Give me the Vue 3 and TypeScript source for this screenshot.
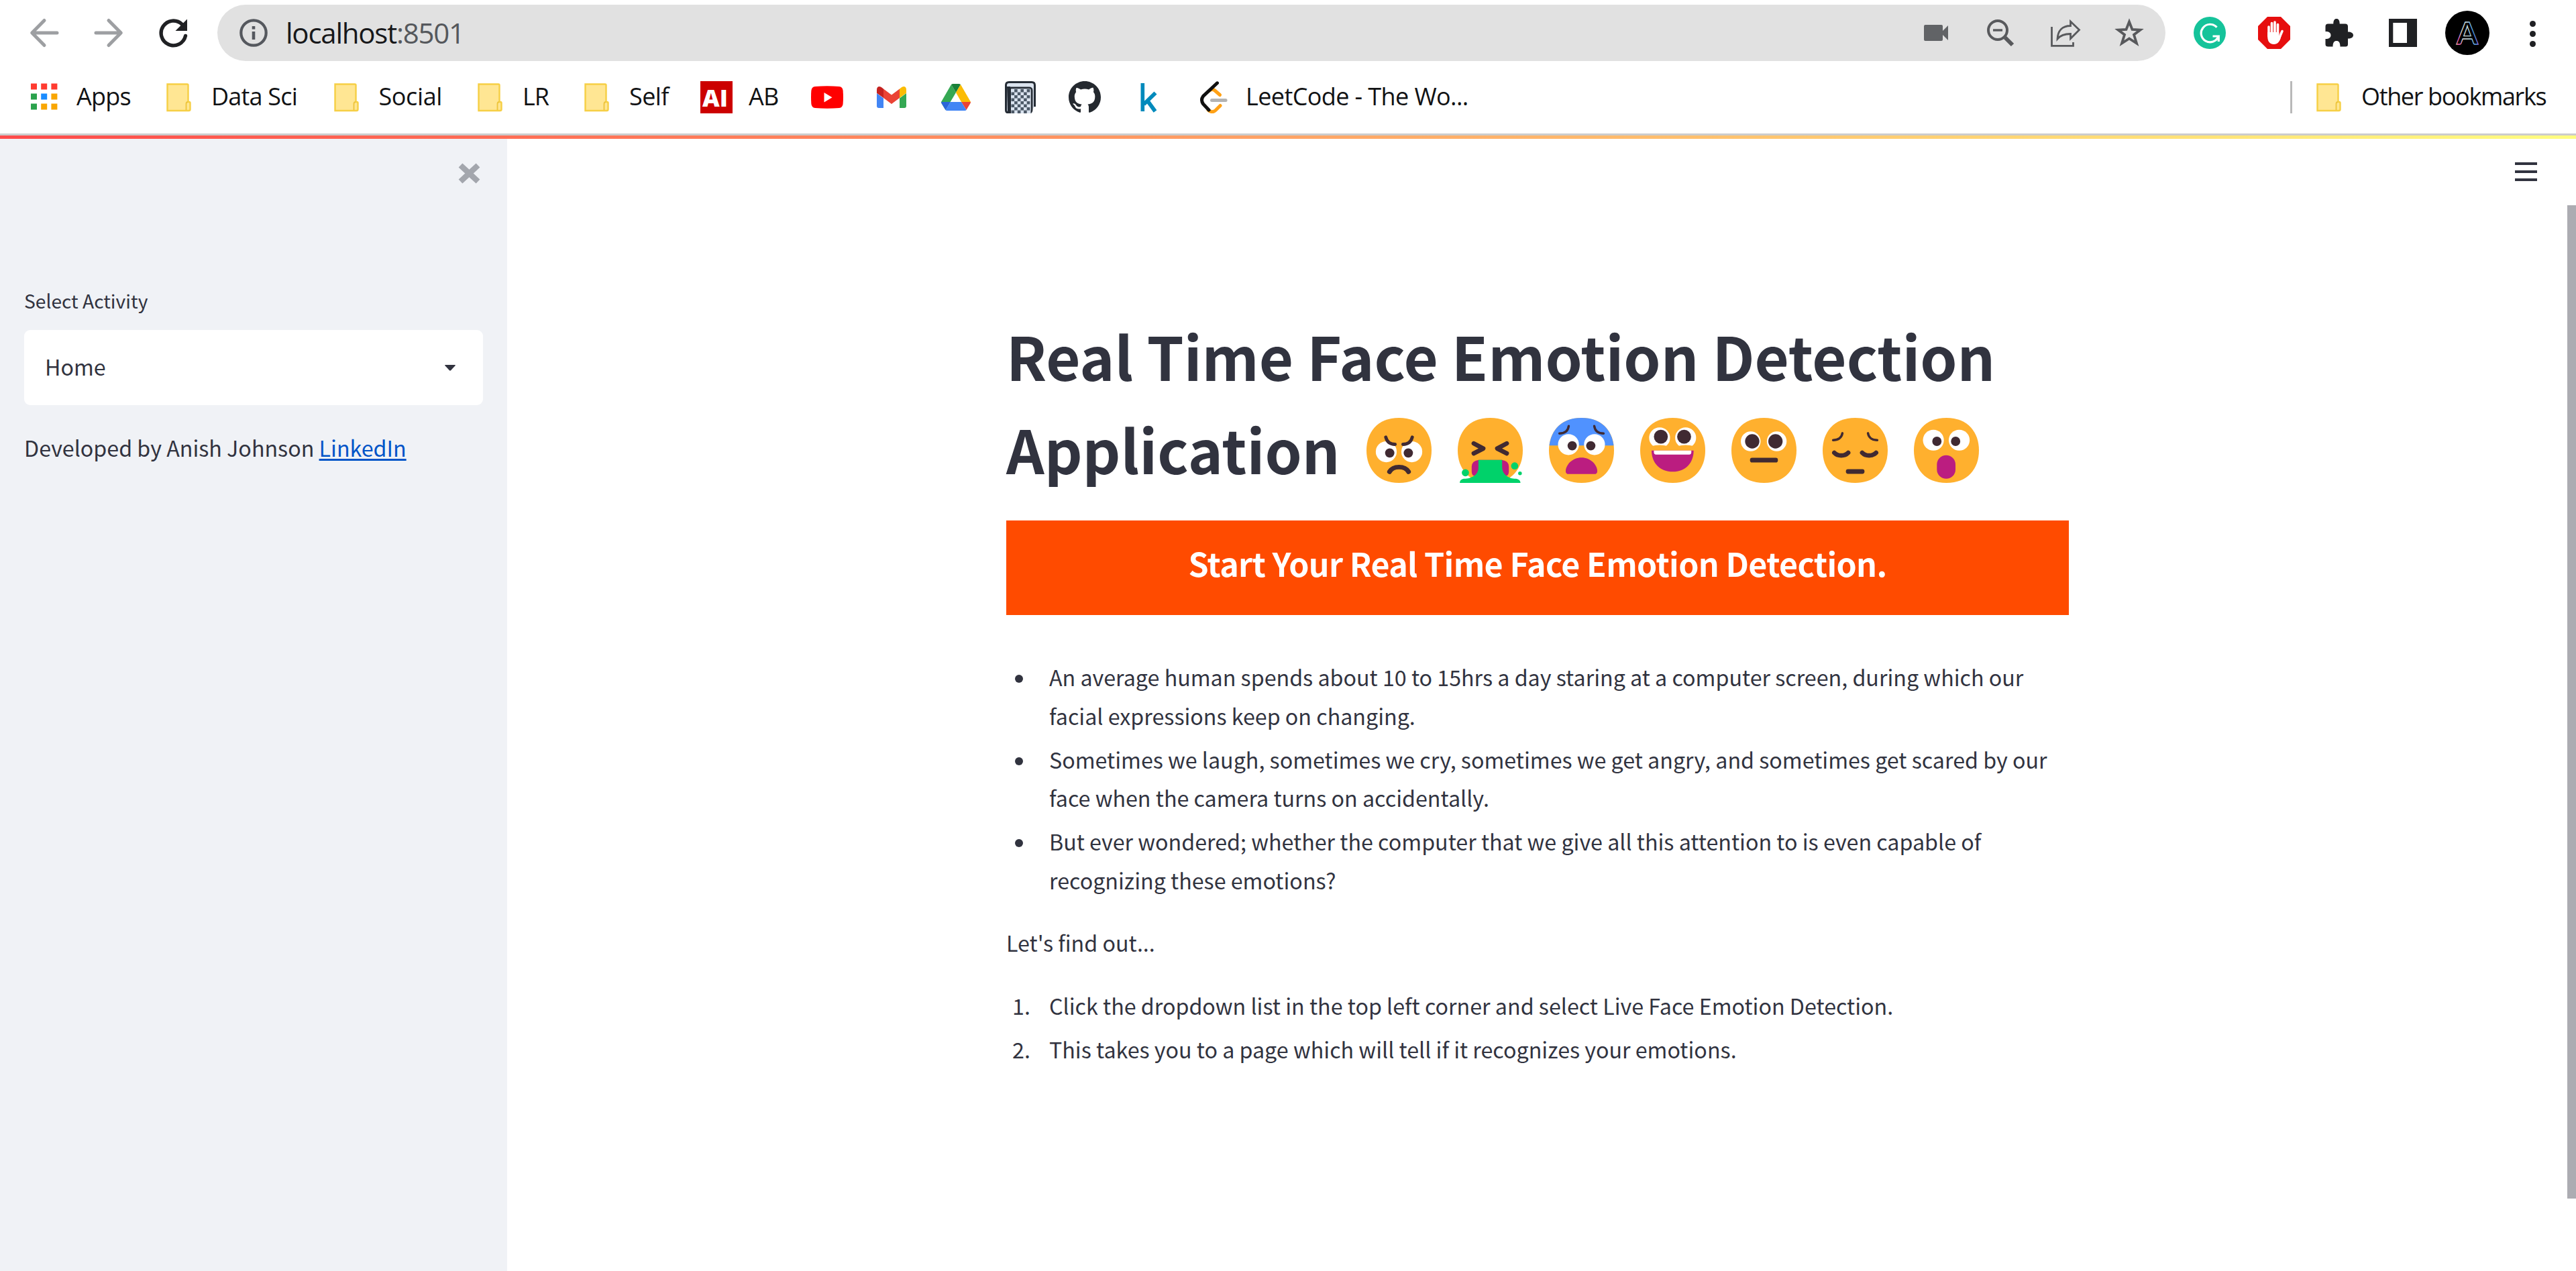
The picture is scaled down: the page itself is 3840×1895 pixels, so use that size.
<script setup lang="ts">
interface Bookmark {
  label: string
  icon: string
  width: number
  tracking: number
}

const bookmarks: Bookmark[] = [
  { label: 'Apps', icon: 'apps', width: 81, tracking: -0.8 },
  { label: 'Data Sci', icon: 'folder', width: 129.5, tracking: -0.8 },
  { label: 'Social', icon: 'folder', width: 94.5, tracking: -0.4 },
  { label: 'LR', icon: 'folder', width: 39, tracking: -1 },
  { label: 'Self', icon: 'folder', width: 58, tracking: -0.6 },
  { label: 'AB', icon: 'ai', width: 45, tracking: -0.7 },
  { label: '', icon: 'youtube', width: 0, tracking: 0 },
  { label: '', icon: 'gmail', width: 0, tracking: 0 },
  { label: '', icon: 'drive', width: 0, tracking: 0 },
  { label: '', icon: 'book', width: 0, tracking: 0 },
  { label: '', icon: 'github', width: 0, tracking: 0 },
  { label: '', icon: 'kaggle', width: 0, tracking: 0 },
  { label: 'LeetCode - The Wo...', icon: 'leetcode', width: 333, tracking: -0.6 },
]

const appDots = ['#ff3b30', '#ff3b30', '#ff3b30', '#2ba24c', '#1a8cff', '#f9a602', '#2ba24c', '#f9a602', '#f9a602']

const facts = [
  ['An average human spends about 10 to 15hrs a day staring at a computer screen, during which our', 'facial expressions keep on changing.'],
  ['Sometimes we laugh, sometimes we cry, sometimes we get angry, and sometimes get scared by our', 'face when the camera turns on accidentally.'],
  ['But ever wondered; whether the computer that we give all this attention to is even capable of', 'recognizing these emotions?'],
]

const steps = [
  'Click the dropdown list in the top left corner and select Live Face Emotion Detection.',
  'This takes you to a page which will tell if it recognizes your emotions.',
]

const emotions = ['angry', 'disgust', 'fear', 'happy', 'neutral', 'sad', 'surprise']

const face = 'M15.999 29.998c9.334 0 13.999-6.268 13.999-14 0-7.73-4.665-13.998-14-13.998C6.665 2 2 8.268 2 15.999c0 7.731 4.664 13.999 13.999 13.999Z'
</script>

<template>
  <div class="window">
    <header class="chrome">
      <div class="toolbar">
        <nav class="nav">
          <svg class="ic" viewBox="0 0 48 48" fill="none" stroke="#9d9fa2" stroke-width="5" stroke-linecap="round" stroke-linejoin="round">
            <path d="M43 24H6M24 5.5L5.7 24 24 42.5" />
          </svg>
          <svg class="ic" viewBox="0 0 48 48" fill="none" stroke="#9d9fa2" stroke-width="5" stroke-linecap="round" stroke-linejoin="round">
            <path d="M5 24H42M24 5.5L42.3 24 24 42.5" />
          </svg>
          <svg class="ic" viewBox="0 0 48 48">
            <path d="M42.5 28.5A18.4 18.4 0 1 1 37.5 11.3" fill="none" stroke="#202124" stroke-width="5.4" stroke-linecap="round" />
            <path d="M45 3.5V21H27.5Z" fill="#202124" />
          </svg>
        </nav>
        <div class="address">
          <svg class="ic" viewBox="0 0 48 48" fill="none" stroke="#55585e">
            <circle cx="24" cy="24" r="18.7" stroke-width="4.2" />
            <path d="M24 22V34" stroke-width="4.6" />
            <path d="M24 14V18.6" stroke-width="4.6" />
          </svg>
          <span class="url">localhost<span class="port">:8501</span></span>
          <div class="actions">
            <svg class="ic" viewBox="0 0 48 48" fill="#616366">
              <path d="M8 12H32q2 0 2 2v7l8-8V35l-8-8v7q0 2-2 2H8q-2 0-2-2V14q0-2 2-2Z" />
            </svg>
            <svg class="ic" viewBox="0 0 48 48" fill="none" stroke="#58595c">
              <circle cx="20" cy="20" r="14" stroke-width="4" />
              <path d="M13 20H27" stroke-width="3.4" />
              <path d="M31 31L42 42" stroke-width="6" />
            </svg>
            <svg class="ic" viewBox="0 0 48 48" fill="none" stroke="#58595c" stroke-width="2.8">
              <path d="M4.5 15V43.4H36.5V38" />
              <path d="M13 33C13.500 21 20 13.500 32.500 13.500V7L45.500 19.500 32.500 32.500V25.500C24 25.500 18 27 13 33Z" />
            </svg>
            <svg class="ic" viewBox="0 0 48 48">
              <path d="M24 7.500L28.500 19 40.500 19.600 31 26.800 35 39.500 24 32.500 13 39.500 17 26.800 7.500 19.600 19.500 19Z" fill="none" stroke="#58595c" stroke-width="3.8" />
            </svg>
          </div>
        </div>
        <div class="extensions">
          <svg class="ic" viewBox="0 0 48 48">
            <circle cx="24" cy="24" r="24" fill="#15c39a" />
            <path d="M34.500 15.800A13.300 13.300 0 1 0 37 29H28.500M37.300 37V29" fill="none" stroke="#fff" stroke-width="3.200" />
          </svg>
          <svg class="ic" viewBox="0 0 48 48">
            <path d="M14 0H34L48 14V34L34 48H14L0 34V14Z" fill="#e60f0f" />
            <g stroke="#fff" stroke-width="3.600" stroke-linecap="round" fill="none">
              <path d="M16 29V15M20.500 26V9.500M25 26V8M29.500 27V11.500" />
              <path d="M36 21.500L31 33" />
            </g>
            <path d="M14.200 23H31.300V29L35 26C34 32 32 41 24 41S14.200 35 14.200 29Z" fill="#fff" />
          </svg>
          <svg class="ic" viewBox="0 0 48 48">
            <path d="M8.500 10.500H16.300C16.300 5.500 17.800 3 21 3S25.700 5.500 25.700 10.500H34Q38 10.500 38 14.500V22.500C43 22.500 46 24.500 46 27.500S43 32.500 38 32.500V41Q38 44.500 34.500 44.500H26.500C26.500 38.500 24.500 36 21 36S15.500 38.500 15.500 44.500H8.500Q4.500 44.500 4.500 41V33C10 33 12.500 31 12.500 27.500S10 22 4.500 22V14.500Q4.500 10.500 8.500 10.500Z" fill="#202124" />
          </svg>
          <svg class="ic" viewBox="0 0 48 48">
            <path d="M3 3H45V45H3ZM9.300 9V39H30V9Z" fill="#202124" fill-rule="evenodd" />
          </svg>
          <svg class="avatar" viewBox="0 0 66 66">
            <defs>
              <linearGradient id="holo" x1="0" y1="1" x2="1" y2="0.700">
                <stop offset="0" stop-color="#f0d264" />
                <stop offset="0.18" stop-color="#ee4fc4" />
                <stop offset="0.35" stop-color="#d9dcd6" />
                <stop offset="0.65" stop-color="#c4e0e6" />
                <stop offset="0.85" stop-color="#4a9be8" />
                <stop offset="1" stop-color="#a04be0" />
              </linearGradient>
            </defs>
            <circle cx="33" cy="33" r="33" fill="#000" />
            <text class="monogram" x="33" y="49.500" text-anchor="middle" fill="none" stroke="url(#holo)" stroke-width="1.300">A</text>
          </svg>
          <svg class="ic" viewBox="0 0 48 48" fill="#202124">
            <circle cx="25.500" cy="10.500" r="4.500" />
            <circle cx="25.500" cy="25.500" r="4.500" />
            <circle cx="25.500" cy="40.500" r="4.500" />
          </svg>
        </div>
      </div>

      <div class="bookmarks">
        <div v-for="(b, i) in bookmarks" :key="i" class="bookmark">
          <svg v-if="b.icon === 'apps'" class="ic" viewBox="0 0 48 48">
            <rect v-for="(c, n) in appDots" :key="n" :x="4 + (n % 3) * 15.200" :y="3.500 + Math.floor(n / 3) * 15" width="9" height="9" :fill="c" />
          </svg>
          <svg v-else-if="b.icon === 'folder'" class="ic" viewBox="0 0 48 48">
            <path d="M6.500 4.500H36Q37.500 4.500 37.500 6V31H39Q40.500 31 40.500 32.500V42Q40.500 44 38.500 44H6.500Z" fill="#ffe693" stroke="#f6cf45" stroke-width="2.400" />
            <path d="M34.500 43V34Q34.500 31 37 31" fill="none" stroke="#edc43b" stroke-width="1.800" />
          </svg>
          <svg v-else-if="b.icon === 'ai'" class="ic" viewBox="0 0 48 48">
            <rect width="48" height="48" fill="#cc0000" />
            <text class="ai" x="3" y="37.500" textLength="38" lengthAdjust="spacingAndGlyphs" fill="#fff">AI</text>
          </svg>
          <svg v-else-if="b.icon === 'youtube'" class="ic" viewBox="0 0 48 48">
            <path d="M6 8Q24 6.500 42 8Q47 8.500 47.600 14Q48.400 24 47.600 34Q47 39.500 42 40Q24 41.500 6 40Q1 39.500.4 34Q-.4 24 .4 14Q1 8.500 6 8Z" fill="#ff0000" />
            <path d="M19.500 17V31.500L31.500 24.200Z" fill="#fff" />
          </svg>
          <svg v-else-if="b.icon === 'gmail'" class="ic" viewBox="0 0 48 48">
            <path d="M2 18L12 25.500V40H5Q2 40 2 37Z" fill="#4285f4" />
            <path d="M46 18L36 25.500V40H43Q46 40 46 37Z" fill="#34a853" />
            <path d="M12 11.500L24 20.500 36 11.500V25L24 34 12 25Z" fill="#ea4335" />
            <path d="M2 13Q2 8 6 8Q8 8 9.500 9.500L12 11.500V25L2 17.800Z" fill="#c5221f" />
            <path d="M46 13Q46 8 42 8Q40 8 38.500 9.500L36 11.500V25L46 17.800Z" fill="#fbbc04" />
          </svg>
          <svg v-else-if="b.icon === 'drive'" class="ic" viewBox="0 0 48 48">
            <path d="M17 5L2 31Q2 32 2.500 33L8.500 43 24 17Z" fill="#34a853" />
            <path d="M17 5Q18 4 20 4H28Q30 4 31 5L24 17Z" fill="#188038" />
            <path d="M31 5L46 31H32L24 17Z" fill="#fbbc04" />
            <path d="M46 31Q46 32 45.500 33L39.500 43 32 31Z" fill="#ea4335" />
            <path d="M2 31H16L8.500 43 2.500 33Q2 32 2 31Z" fill="#2b66d9" />
            <path d="M16 31H32L39.500 43Q39 44 37 44H11Q9 44 8.500 43Z" fill="#4285f4" />
          </svg>
          <svg v-else-if="b.icon === 'book'" class="ic" viewBox="0 0 48 48">
            <path d="M7 1.500H42Q46 1.500 46 5.500V38L41 42V48H7Q3 48 3 44V5.500Q3 1.500 7 1.500Z" fill="#dbe3ee" />
            <path d="M45.500 38V6Q45.500 1.500 41 1.500H7Q2.500 1.500 2.500 6V43Q2.500 47 6.500 47H9V10H37Q41 10 41 14V42Q41 46 38.500 47" fill="none" stroke="#252c35" stroke-width="3" />
            <path d="M4 8H9V46H5Z" fill="#252c35" />
            <rect x="10" y="11.500" width="29.500" height="36.500" fill="#d9e2ee" />
            <g fill="#4c5967">
              <template v-for="r in 8" :key="r">
                <rect v-for="q in 3" :key="q" :x="10.500 + (q - 1) * 9.300 + (r % 2) * 4.600" :y="12 + (r - 1) * 4.500" width="4.600" height="4.500" />
              </template>
            </g>
          </svg>
          <svg v-else-if="b.icon === 'github'" class="ic" viewBox="0 0 16 16">
            <path fill="#24292f" d="M8 0C3.580 0 0 3.580 0 8c0 3.540 2.290 6.530 5.470 7.590.4.070.55-.17.55-.38 0-.19-.01-.82-.01-1.490-2.010.37-2.530-.49-2.690-.94-.09-.23-.48-.94-.82-1.130-.28-.15-.68-.52-.01-.53.63-.01 1.080.58 1.230.82.72 1.210 1.870.87 2.330.66.07-.52.28-.87.51-1.070-1.780-.2-3.640-.89-3.640-3.950 0-.87.31-1.590.82-2.150-.08-.2-.36-1.020.08-2.120 0 0 .67-.21 2.200.82.64-.18 1.320-.27 2-.27s1.360.09 2 .27c1.530-1.040 2.200-.82 2.200-.82.44 1.100.16 1.920.08 2.120.51.56.82 1.270.82 2.150 0 3.070-1.870 3.750-3.650 3.950.29.25.54.73.54 1.480 0 1.070-.01 1.930-.01 2.200 0 .21.15.46.55.38A8.010 8.010 0 0 0 16 8c0-4.420-3.580-8-8-8Z" />
          </svg>
          <svg v-else-if="b.icon === 'kaggle'" class="ic" viewBox="0 0 48 48">
            <path d="M14.300 3V45" stroke="#008abc" stroke-width="5.600" />
            <path d="M33.500 17.500L16 34.500M21 28.500L33 45" stroke="#008abc" stroke-width="5.800" fill="none" />
          </svg>
          <svg v-else-if="b.icon === 'leetcode'" class="ic" viewBox="0 0 48 48" fill="none" stroke-width="5" stroke-linecap="round">
            <path d="M17.500 14.500Q22 10.500 26 14L33.500 20.500" stroke="#ffa116" />
            <path d="M16 43Q22 48 27 43.500L34 36.500" stroke="#ffa116" />
            <path d="M29.500 2.800L8.500 22.500Q4.500 28 8.500 34L17 43" stroke="#101010" />
            <path d="M21.500 28.500H42" stroke="#b3b3b3" />
          </svg>
          <span v-if="b.label" class="label" :style="{ width: b.width + 'px', letterSpacing: b.tracking + 'px' }">{{ b.label }}</span>
        </div>
        <div class="others">
          <span class="divider"></span>
          <svg class="ic" viewBox="0 0 48 48">
            <path d="M6.500 4.500H36Q37.500 4.500 37.500 6V31H39Q40.500 31 40.500 32.500V42Q40.500 44 38.500 44H6.500Z" fill="#ffe693" stroke="#f6cf45" stroke-width="2.400" />
            <path d="M34.500 43V34Q34.500 31 37 31" fill="none" stroke="#edc43b" stroke-width="1.800" />
          </svg>
          <span class="label other">Other bookmarks</span>
        </div>
      </div>
    </header>

    <div class="decoration"></div>

    <div class="app">
      <aside class="sidebar">
        <svg class="close" viewBox="0 0 33 31"><path d="M3.500 3.500L29.500 27.500M29.500 3.500L3.500 27.500" stroke="#a3a6ad" stroke-width="8.500" /></svg>
        <label class="caption">Select Activity</label>
        <div class="select">
          <span>Home</span>
          <svg class="caret" viewBox="0 0 16 9"><path d="M0.500 0H15.500Q16 .6 15.500 1.200L9 8.300Q8 9 7 8.300L.5 1.200Q0 .6.5 0Z" fill="#31333f" /></svg>
        </div>
        <p class="credit">Developed by Anish Johnson <a>LinkedIn</a></p>
      </aside>

      <main class="main">
        <svg class="menu" viewBox="0 0 33 28"><path d="M0 2H33M0 14H33M0 26H33" stroke="#31333f" stroke-width="4" /></svg>
        <div class="scroll"></div>
        <section class="content">
          <h1>
            <span class="row">Real Time Face Emotion Detection</span>
            <span class="row">
              <span class="word">Application</span>
              <svg v-for="e in emotions" :key="e" class="emoji" viewBox="2 2 28 28">
                <path :d="face" fill="#ffb02e" />
                <g v-if="e === 'angry'">
                  <circle cx="10.500" cy="16.600" r="4.500" fill="#fff" />
                  <circle cx="21.500" cy="16.600" r="4.500" fill="#fff" />
                  <circle cx="12" cy="17.100" r="2" fill="#402a32" />
                  <circle cx="20" cy="17.100" r="2" fill="#402a32" />
                  <g fill="none" stroke="#402a32" stroke-linecap="round">
                    <path d="M10.300 10.300C10.800 12.300 12.200 13.400 14.300 13.400M21.700 10.300C21.200 12.300 19.800 13.400 17.700 13.400" stroke-width="1.400" />
                    <path d="M11.900 25.200C13.500 22.500 18.500 22.500 20.100 25.200" stroke-width="2" />
                  </g>
                </g>
                <g v-else-if="e === 'disgust'">
                  <path d="M8.900 13L13 15.200 8.900 17.300M23.100 13L19 15.200 23.100 17.300" fill="none" stroke="#402a32" stroke-width="1.900" stroke-linecap="round" stroke-linejoin="round" />
                  <path d="M11 20.100H21Q24 20.500 24 23V25Q24 26.300 23.200 26.900H8.800Q8 26.300 8 25V23Q8 20.500 11 20.100Z" fill="#bb1d80" />
                  <path d="M10.900 20.100H21.100V23C21.100 26.500 24 28.200 27 28.200C28.500 28.400 29 29.200 29 30H2.900C2.900 29.200 3.300 28.400 4.700 28.200C8 28.200 10.900 26.500 10.900 23.500Z" fill="#00d26a" />
                  <circle cx="5.300" cy="25.600" r="1.550" fill="#00d26a" />
                  <circle cx="26.500" cy="22.700" r="1.550" fill="#00d26a" />
                  <circle cx="28.800" cy="25.900" r="0.800" fill="#00d26a" />
                </g>
                <g v-else-if="e === 'fear'">
                  <path d="M2.150 13.900C3 7.300 7.300 2 15.998 2S29 7.300 29.850 13.900Z" fill="#5092ff" />
                  <circle cx="10.400" cy="13.500" r="4.500" fill="#fff" />
                  <circle cx="21.600" cy="13.500" r="4.500" fill="#fff" />
                  <circle cx="12" cy="14" r="2" fill="#402a32" />
                  <circle cx="20" cy="14" r="2" fill="#402a32" />
                  <path d="M6.500 8.700C8.500 8.700 10.200 7.800 10.500 5.500M25.500 8.700C23.500 8.700 21.800 7.800 21.500 5.500" fill="none" stroke="#402a32" stroke-linecap="round" />
                  <path d="M16 19.100C19.900 19.100 22.800 22.200 22.800 25Q22.800 26.200 21.500 26.200H10.500Q9.200 26.200 9.200 25C9.200 22.200 12.100 19.100 16 19.100Z" fill="#bb1d80" />
                </g>
                <g v-else-if="e === 'happy'">
                  <circle cx="10.350" cy="10.600" r="4.500" fill="#fff" />
                  <circle cx="21.550" cy="10.600" r="4.500" fill="#fff" />
                  <circle cx="10.900" cy="10.100" r="3" fill="#402a32" />
                  <circle cx="20.900" cy="10.100" r="3" fill="#402a32" />
                  <path d="M6.700 14.200Q10.350 13.200 14 14.200V15.600H6.700ZM17.900 14.200Q21.550 13.200 25.200 14.200V15.600H17.900Z" fill="#ffb02e" />
                  <path d="M6.900 16.100H25C25 21.500 21.500 25.200 16 25.200S6.900 21.500 6.900 16.100Z" fill="#bb1d80" />
                  <path d="M7.900 16.100H24V16.900Q24 17.800 23.100 17.800H8.800Q7.900 17.800 7.900 16.900Z" fill="#fff" />
                </g>
                <g v-else-if="e === 'neutral'">
                  <circle cx="10.300" cy="12.100" r="4.250" fill="#fff" />
                  <circle cx="21.500" cy="12.100" r="4.250" fill="#fff" />
                  <circle cx="10.950" cy="12.100" r="3.080" fill="#402a32" />
                  <circle cx="20.950" cy="12.100" r="3.080" fill="#402a32" />
                  <rect x="10" y="19.200" width="12" height="2" rx="0.900" fill="#402a32" />
                </g>
                <g v-else-if="e === 'sad'">
                  <g fill="none" stroke="#402a32" stroke-linecap="round">
                    <path d="M6.500 11.600C8.500 11.600 10.200 10.700 10.500 8.600M25.500 11.600C23.500 11.600 21.800 10.700 21.500 8.600" />
                    <path d="M7 17C8.500 18.600 11.500 18.600 13 17M19 17C20.500 18.600 23.500 18.600 25 17" stroke-width="1.900" />
                  </g>
                  <rect x="12" y="24.100" width="8" height="2" rx="0.900" fill="#402a32" />
                </g>
                <g v-else>
                  <circle cx="10.400" cy="11.600" r="4.500" fill="#fff" />
                  <circle cx="21.500" cy="11.600" r="4.500" fill="#fff" />
                  <circle cx="11.900" cy="12.100" r="2" fill="#402a32" />
                  <circle cx="19.950" cy="12.100" r="2" fill="#402a32" />
                  <rect x="11.900" y="18.100" width="8" height="10.100" rx="4" fill="#bb1d80" />
                </g>
              </svg>
            </span>
          </h1>
          <div class="banner"><h2>Start Your Real Time Face Emotion Detection.</h2></div>
          <ul class="list">
            <li v-for="(f, i) in facts" :key="i">
              <span class="marker"><i class="bullet"></i></span>
              <span class="text">{{ f[0] }}<br />{{ f[1] }}</span>
            </li>
          </ul>
          <p class="para">Let's find out...</p>
          <ol class="list">
            <li v-for="(s, i) in steps" :key="i">
              <span class="marker num">{{ i + 1 }}.</span>
              <span class="text">{{ s }}</span>
            </li>
          </ol>
        </section>
      </main>
    </div>
  </div>
</template>

<style>
body { overflow: hidden; }
</style>

<style scoped>
.window {
  width: 3840px;
  height: 1895px;
  display: flex;
  flex-direction: column;
  background: #fff;
  color: #31333f;
  font-family: "Noto Sans CJK SC", "Open Sans", sans-serif;
  font-size: 32.22px;
  overflow: hidden;
}
.chrome {
  height: 199px;
  border-bottom: 3px solid #cccccc;
  font-family: "Open Sans", "Noto Sans", sans-serif;
  flex: none;
}
.ic { width: 48px; height: 48px; flex: none; display: block; }
.toolbar {
  display: flex;
  align-items: center;
  height: 98px;
  padding: 0 42px;
}
.nav { display: flex; gap: 48px; margin-right: 42px; }
.address {
  flex: 1;
  display: flex;
  align-items: center;
  height: 84px;
  padding: 0 30px;
  border-radius: 42px;
  background: #e1e1e1;
}
.url {
  flex: 1;
  margin-left: 24px;
  font-size: 42px;
  line-height: 84px;
  letter-spacing: -1.23px;
  color: #17181a;
  white-space: nowrap;
}
.port { color: #55585c; }
.actions { display: flex; gap: 48px; }
.extensions { display: flex; align-items: center; gap: 48px; margin-left: 42px; }
.avatar { width: 66px; height: 66px; margin: 0 -9px; display: block; }
.monogram { font: 700 46px "Lato", sans-serif; }
.ai { font: 800 36px "Open Sans", sans-serif; }
.bookmarks {
  display: flex;
  align-items: center;
  gap: 48px;
  height: 94px;
  padding: 0 42px;
  font-size: 36px;
  color: #111214;
}
.bookmark, .others { display: flex; align-items: center; gap: 24px; }
.label { white-space: nowrap; line-height: 44px; padding-bottom: 3px; }
.others { margin-left: auto; }
.divider { width: 3px; height: 48px; background: #b9b9b9; margin-right: 7px; }
.other { width: 278px; letter-spacing: -1.35px; }
.decoration {
  height: 5px;
  flex: none;
  background: linear-gradient(90deg, #ff4b4b, #fffd80);
}
.app { flex: 1; display: flex; min-height: 0; }
.sidebar {
  width: 756px;
  flex: none;
  box-sizing: border-box;
  padding: 36px 36px 0;
  background: #f0f2f6;
  display: flex;
  flex-direction: column;
}
.close { width: 33px; height: 31px; align-self: flex-end; margin-right: 4px; }
.caption { margin-top: 151px; font-size: 28.2px; line-height: 46px; }
.select {
  display: flex;
  align-items: center;
  justify-content: space-between;
  height: 112px;
  margin-top: 21px;
  padding: 0 41px 0 31px;
  border-radius: 9px;
  background: #fff;
  box-sizing: border-box;
}
.select span { line-height: 58px; padding-bottom: 4px; }
.caret { width: 16px; height: 9px; }
.credit { margin: 34px 0 0; line-height: 58px; white-space: nowrap; }
.credit a { color: #0054c8; text-decoration: underline; text-decoration-thickness: 3px; text-underline-offset: 3px; }
.main { flex: 1; position: relative; }
.menu { position: absolute; right: 58px; top: 35px; width: 33px; height: 28px; }
.scroll { position: absolute; right: 0; top: 99px; width: 13px; height: 1481px; background: #acacb2; }
.content { width: 1584px; margin-left: 744px; padding-top: 253px; }
h1 { margin: 0; font-size: 88.4px; line-height: 138.600px; font-weight: 700; }
.row { display: flex; align-items: center; height: 138.600px; white-space: nowrap; }
.word { width: 537px; }
.emoji { width: 97px; height: 97px; margin: 7px 39px 0 0; flex: none; overflow: visible; }
.banner { margin-top: 39px; height: 141px; background: #ff4b00; text-align: center; }
h2 {
  margin: 0;
  padding-top: 27px;
  font-size: 48.300px;
  line-height: 72px;
  font-weight: 700;
  letter-spacing: -0.620px;
  color: #fff;
}
.list { margin: 0; padding: 0; list-style: none; display: flex; flex-direction: column; gap: 7.200px; }
ul.list { margin-top: 64px; }
.list li { display: flex; line-height: 57.600px; }
.marker { width: 64px; flex: none; display: flex; justify-content: center; height: 57.600px; align-items: center; }
.bullet { width: 12px; height: 12px; border-radius: 50%; background: #31333f; margin: 5px 26px 0 0; }
.num { justify-content: flex-start; padding-left: 9px; width: 55px; }
.text { white-space: nowrap; }
.para { margin: 36px 0; line-height: 57.600px; }
</style>
